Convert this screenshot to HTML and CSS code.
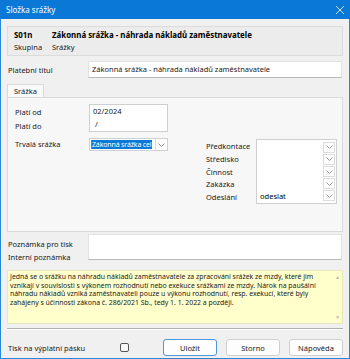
FILE: index.html
```html
<!DOCTYPE html>
<html lang="cs">
<head>
<meta charset="UTF-8" />
<title>Složka srážky</title>
<link rel="stylesheet" href="styles.css">
</head>
<body>

<div class="window">
  <div class="title-bar">
    <span class="title">Složka srážky</span>
    <span class="close">
      <svg width="10" height="10" viewBox="0 0 10 10"><path d="M1 1 L9 9 M9 1 L1 9" stroke="#cfe3f7" stroke-width="1" fill="none"/></svg>
    </span>
  </div>

  <div class="content">
    <div class="header-panel">
      <div class="header-row">
        <span class="code">S01n</span>
        <span class="name">Zákonná srážka - náhrada nákladů zaměstnavatele</span>
      </div>
      <div class="header-row">
        <span class="code-label">Skupina</span>
        <span>Srážky</span>
      </div>
    </div>

    <div class="form-row title-row">
      <label class="row-label">Platební titul</label>
      <div class="text-box wide">Zákonná srážka - náhrada nákladů zaměstnavatele</div>
    </div>

    <div class="tabs">
      <div class="tab active">Srážka</div>
    </div>
    <div class="tab-panel">
      <div class="dates">
        <div class="date-labels">
          <span>Platí od</span>
          <span>Platí do</span>
        </div>
        <div class="date-box">
          <span>02/2024</span>
          <span class="slash">/</span>
        </div>
      </div>

      <div class="lower">
        <div class="permanent">
          <span class="permanent-label">Trvalá srážka</span>
          <div class="combo">
            <span class="combo-text"><span class="selected">Zákonná srážka cel</span></span>
            <span class="combo-arrow"><svg width="7" height="4" viewBox="0 0 7 4"><path d="M0.5 0.5 L3.5 3.5 L6.5 0.5" stroke="#888" fill="none"/></svg></span>
          </div>
        </div>

        <div class="accounting">
          <div class="acc-labels">
            <span>Předkontace</span>
            <span>Středisko</span>
            <span>Činnost</span>
            <span>Zakázka</span>
            <span>Odeslání</span>
          </div>
          <div class="acc-box">
            <div class="acc-row"><span></span><span class="acc-arrow"><svg width="7" height="4" viewBox="0 0 7 4"><path d="M0.5 0.5 L3.5 3.5 L6.5 0.5" stroke="#999" fill="none"/></svg></span></div>
            <div class="acc-row"><span></span><span class="acc-arrow"><svg width="7" height="4" viewBox="0 0 7 4"><path d="M0.5 0.5 L3.5 3.5 L6.5 0.5" stroke="#999" fill="none"/></svg></span></div>
            <div class="acc-row"><span></span><span class="acc-arrow"><svg width="7" height="4" viewBox="0 0 7 4"><path d="M0.5 0.5 L3.5 3.5 L6.5 0.5" stroke="#999" fill="none"/></svg></span></div>
            <div class="acc-row"><span></span><span class="acc-arrow"><svg width="7" height="4" viewBox="0 0 7 4"><path d="M0.5 0.5 L3.5 3.5 L6.5 0.5" stroke="#999" fill="none"/></svg></span></div>
            <div class="acc-row"><span class="acc-value">odeslat</span><span class="acc-arrow"><svg width="7" height="4" viewBox="0 0 7 4"><path d="M0.5 0.5 L3.5 3.5 L6.5 0.5" stroke="#999" fill="none"/></svg></span></div>
          </div>
        </div>
      </div>
    </div>

    <div class="form-row notes-row">
      <div class="note-labels">
        <span>Poznámka pro tisk</span>
        <span>Interní poznámka</span>
      </div>
      <div class="text-box notes"></div>
    </div>

    <div class="info">
      <p>Jedná se o srážku na náhradu nákladů zaměstnavatele za zpracování srážek ze mzdy, které jim vznikají v souvislosti s výkonem rozhodnutí nebo exekuce srážkami ze mzdy. Nárok na paušální náhradu nákladů vzniká zaměstnavateli pouze u výkonu rozhodnutí, resp. exekucí, které byly zahájeny s účinností zákona č. 286/2021 Sb., tedy 1. 1. 2022 a později.</p>
      <div class="scrollbar">
        <span class="up">▲</span>
        <span class="down">▼</span>
      </div>
    </div>

    <div class="separator"></div>

    <div class="footer">
      <span class="print-label">Tisk na výplatní pásku</span>
      <span class="checkbox"></span>
      <div class="buttons">
        <button class="btn default">Uložit</button>
        <button class="btn">Storno</button>
        <button class="btn">Nápověda</button>
      </div>
    </div>
  </div>
</div>

</body>
</html>
```

FILE: styles.css
```css
* {
  box-sizing: border-box;
}

body {
  margin: 0;
  font-family: 'Noto Sans', 'Open Sans', sans-serif;
  font-size: 7.5px;
  color: #1a1a1a;
  background: #ffffff;
}

.window {
  width: 350px;
  height: 359px;
  border: 1px solid #2a86d6;
  border-top: none;
  background: #f0f0f0;
  display: flex;
  flex-direction: column;
}

.title-bar {
  height: 19px;
  margin: 0 -1px;
  background: #0a78d6;
  color: #ffffff;
  display: flex;
  align-items: center;
  justify-content: space-between;
  padding: 0 4px 0 6px;
  font-size: 8px;
}

.close {
  display: flex;
  width: 12px;
  justify-content: center;
}

.content {
  padding: 0 6px;
  flex: 1;
  display: flex;
  flex-direction: column;
}

.header-panel {
  margin-top: 7px;
  height: 30px;
  border: 1px solid #dcdcdc;
  background: #ececec;
  padding: 2px 6px;
  display: flex;
  flex-direction: column;
  justify-content: space-around;
}

.header-row {
  display: flex;
}

.code,
.code-label {
  width: 38px;
}

.code,
.name {
  font-weight: bold;
  font-size: 7.9px;
  color: #000;
}

.form-row {
  display: flex;
}

.title-row {
  margin-top: 5px;
  align-items: center;
}

.row-label {
  width: 81px;
  padding-left: 1px;
}

.text-box {
  background: #ffffff;
  border: 1px solid #e2e2e2;
  border-bottom-color: #b8b8b8;
}

.wide {
  flex: 1;
  height: 17px;
  margin-right: 1px;
  padding: 2px 3px;
}

.tabs {
  margin-top: 6px;
  display: flex;
}

.tab {
  padding: 1px 6px 2px;
  border: 1px solid #dadada;
  border-bottom: none;
  background: #f9f9f9;
  height: 14px;
}

.tab-panel {
  height: 135px;
  border: 1px solid #dadada;
  background: #f7f7f7;
  margin-top: -1px;
  padding: 6px 6px 0 7px;
}

.dates {
  display: flex;
}

.date-labels {
  width: 74px;
  display: flex;
  flex-direction: column;
  padding-top: 3px;
  gap: 4px;
}

.date-box {
  width: 79px;
  height: 28px;
  background: #ffffff;
  border: 1px solid #cfcfcf;
  display: flex;
  flex-direction: column;
  padding: 1px 3px;
  gap: 3px;
}

.slash {
  padding-left: 2px;
}

.lower {
  display: flex;
  margin-top: 6px;
}

.permanent {
  display: flex;
  align-items: flex-start;
}

.permanent-label {
  width: 74px;
  padding-top: 1px;
}

.combo {
  width: 79px;
  height: 13px;
  background: #ffffff;
  border: 1px solid #cfcfcf;
  display: flex;
  align-items: center;
}

.combo-text {
  flex: 1;
  white-space: nowrap;
  padding-left: 1px;
  font-size: 7px;
  letter-spacing: -0.15px;
}

.selected {
  background: #0a78d6;
  color: #ffffff;
  border-left: 1px solid #e06000;
}

.combo-arrow,
.acc-arrow {
  width: 12px;
  height: 11px;
  display: flex;
  align-items: center;
  justify-content: center;
  border-left: 1px solid #dcdcdc;
  background: #ffffff;
}

.accounting {
  display: flex;
  margin-left: 38px;
  margin-top: 1px;
}

.acc-labels {
  width: 50px;
  display: flex;
  flex-direction: column;
  padding-top: 2px;
}

.acc-labels span {
  height: 12.8px;
}

.acc-box {
  width: 81px;
  height: 65px;
  background: #ffffff;
  border: 1px solid #cfcfcf;
  display: flex;
  flex-direction: column;
  padding: 1px 0;
}

.acc-row {
  flex: 1;
  display: flex;
  align-items: center;
  justify-content: space-between;
}

.acc-arrow {
  border: 1px solid #dcdcdc;
  margin-right: 1px;
}

.acc-value {
  padding-left: 3px;
  color: #000;
}

.notes-row {
  margin-top: 2px;
}

.note-labels {
  width: 81px;
  display: flex;
  flex-direction: column;
  padding: 5px 0 0 1px;
  gap: 3px;
}

.notes {
  flex: 1;
  height: 26px;
  margin-right: 1px;
}

.info {
  margin-top: 8px;
  height: 54px;
  background: #ffffcc;
  border: 1px solid #e8e8c0;
  display: flex;
}

.info p {
  margin: 0;
  flex: 1;
  padding: 2px 2px 0 2px;
  font-size: 6.9px;
  line-height: 8.7px;
  color: #222;
}

.scrollbar {
  width: 9px;
  display: flex;
  flex-direction: column;
  justify-content: space-between;
  align-items: center;
  color: #b8b8b8;
  font-size: 5px;
  padding: 3px 0;
}

.separator {
  margin-top: 4px;
  border-top: 1px solid #b0b0b0;
  border-bottom: 1px solid #ffffff;
}

.footer {
  display: flex;
  align-items: center;
  margin-top: 9px;
}

.print-label {
  width: 113px;
  padding-left: 1px;
}

.checkbox {
  width: 9px;
  height: 9px;
  border: 1px solid #555;
  border-radius: 2px;
  background: #f8f8f8;
}

.buttons {
  margin-left: auto;
  display: flex;
  gap: 9px;
}

.btn {
  width: 54px;
  height: 17px;
  font-family: inherit;
  font-size: 7.5px;
  color: #1a1a1a;
  background: #fdfdfd;
  border: 1px solid #d0d0d0;
  border-radius: 3px;
  padding: 0;
}

.btn.default {
  border-color: #4f95d8;
}
```
